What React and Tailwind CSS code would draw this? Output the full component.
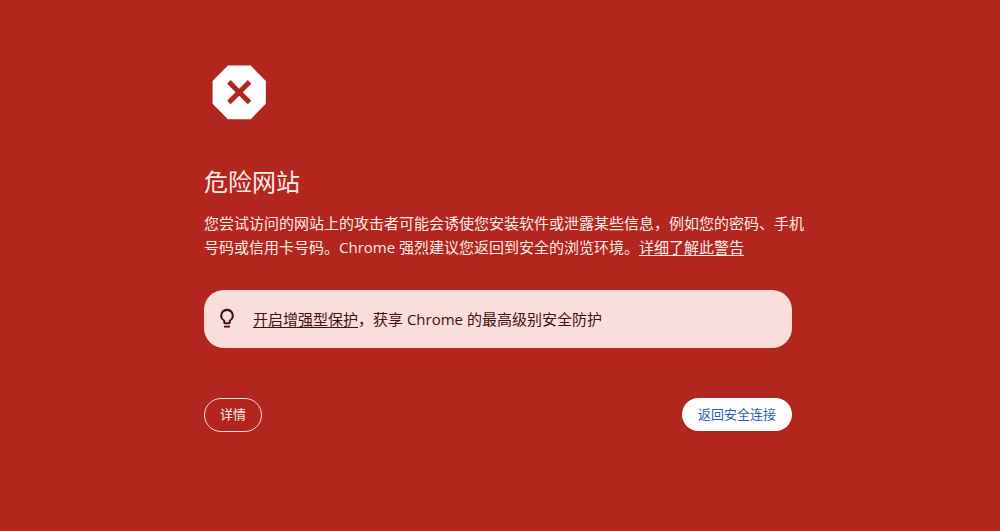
function DangerIcon() {
  return (
    <svg className="size-[71px]" viewBox="0 0 24 24" aria-hidden="true">
      <path
        fill="#ffffff"
        fillRule="evenodd"
        d="M15.8 2.9H8.1L2.9 8.1v7.7L8.1 21h7.7l5.1-5.2V8.1L15.8 2.9ZM16 14.8l-1.2 1.2-2.9-2.9L9 16l-1.2-1.2 2.9-2.9L7.8 9 9 7.8l2.9 2.9 2.9-2.9L16 9l-2.9 2.9 2.9 2.9Z"
      />
    </svg>
  );
}

function BulbIcon() {
  return (
    <svg className="size-6 shrink-0" viewBox="0 0 24 24" fill="currentColor" aria-hidden="true">
      <path d="M9 18.8h6v1.6H9v-1.6ZM12 1.8a6.7 6.7 0 0 0-3.7 12.3v1.5c0 .9.7 1.6 1.6 1.6h4.2c.9 0 1.6-.7 1.6-1.6v-1.5A6.7 6.7 0 0 0 12 1.8Zm2.6 11-.8.5v1.9h-3.6v-1.9l-.8-.5A4.8 4.8 0 1 1 14.6 12.8Z" />
    </svg>
  );
}

export default function App() {
  return (
    <div className="min-h-screen bg-[#b3261e] pt-[57px] pr-7 pb-12 pl-6 font-['Open_Sans','Noto_Sans_CJK_SC',sans-serif] text-[#fdecea]">
      <main className="mx-auto w-full max-w-[588px]">
        <DangerIcon />
        <h1 className="mt-9 text-2xl leading-9">危险网站</h1>
        <p className="mt-[11px] -mr-3 text-[15px] leading-6">
          您尝试访问的网站上的攻击者可能会诱使您安装软件或泄露某些信息，例如您的密码、手机号码或信用卡号码。Chrome
          强烈建议您返回到安全的浏览环境。
          <a href="#learn-more" className="underline underline-offset-2">
            详细了解此警告
          </a>
        </p>
        <section className="mt-[31px] flex items-center gap-3.5 rounded-[20px] bg-[#f9dedc] px-[11px] py-4 text-[#410e0b]">
          <BulbIcon />
          <p className="text-[15px] leading-[26px]">
            <a href="#enhanced-protection" className="underline underline-offset-2">
              开启增强型保护
            </a>
            ，获享 Chrome 的最高级别安全防护
          </p>
        </section>
        <div className="mt-[50px] flex items-start justify-between text-[13px]">
          <button type="button" className="h-[34px] rounded-full border border-[#f9dedc] px-[15px]">
            详情
          </button>
          <button type="button" className="h-[33px] rounded-full bg-white px-4 text-[#1f62b5]">
            返回安全连接
          </button>
        </div>
      </main>
    </div>
  );
}
